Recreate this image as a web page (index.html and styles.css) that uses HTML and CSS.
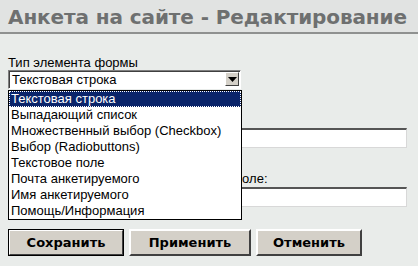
FILE: index.html
```html
<!DOCTYPE html>
<html lang="ru">
<head>
    <meta charset="UTF-8">
    <title>Анкета на сайте - Редактирование</title>
    <link rel="stylesheet" href="styles.css">
</head>
<body>
    <div class="header">
        <h1>Анкета на сайте - Редактирование</h1>
    </div>
    <div class="content">
        <div class="field">
            <div class="label">Тип элемента формы</div>
            <div class="select">
                <span class="select-value">Текстовая строка</span>
                <span class="select-arrow"><svg width="9" height="5" viewBox="0 0 9 5"><path d="M0 0h9L4.5 5z" fill="#000"/></svg></span>
                <ul class="options">
                    <li class="selected">Текстовая строка</li>
                    <li>Выпадающий список</li>
                    <li>Множественный выбор (Checkbox)</li>
                    <li>Выбор (Radiobuttons)</li>
                    <li>Текстовое поле</li>
                    <li>Почта анкетируемого</li>
                    <li>Имя анкетируемого</li>
                    <li>Помощь/Информация</li>
                </ul>
            </div>
        </div>
        <div class="field">
            <div class="label">Вопрос:</div>
            <input class="text" type="text">
        </div>
        <div class="field">
            <div class="label">Значение, вводимое по умолчанию в поле:</div>
            <input class="text" type="text">
        </div>
        <div class="buttons">
            <button class="btn default">Сохранить</button>
            <button class="btn">Применить</button>
            <button class="btn">Отменить</button>
        </div>
    </div>
</body>
</html>
```

FILE: styles.css
```css
body {
    margin: 0;
    background: #e9ecea;
    font-family: "DejaVu Sans", Verdana, sans-serif;
    font-size: 12px;
    color: #000;
}

.header {
    background: #e1e3e2;
    border-bottom: 2px solid #8f9190;
    height: 32px;
    padding: 0 8px;
}

.header h1 {
    margin: 0;
    padding-top: 5px;
    font-size: 20px;
    line-height: 24px;
    font-weight: bold;
    color: #6e7070;
    white-space: nowrap;
    letter-spacing: -0.1px;
}

.content {
    padding: 21px 8px 0 8px;
}

.field {
    margin-bottom: 23px;
}

.label {
    font-family: "Liberation Sans", Arial, sans-serif;
    font-size: 13px;
    line-height: 15px;
    height: 15px;
    white-space: nowrap;
}

.field + .field .label {
    height: 16px;
}

.select {
    position: relative;
    width: 231px;
    height: 17px;
    border: 1px solid;
    border-color: #7f7f7f #ffffff #ffffff #7f7f7f;
    box-shadow: inset 1px 1px 0 #404040;
    background: #fff;
    font-family: "Liberation Sans", Arial, sans-serif;
    font-size: 13px;
    line-height: 17px;
}

.select-value {
    padding-left: 3px;
}

.select-arrow {
    position: absolute;
    right: 1px;
    top: 1px;
    width: 14px;
    height: 14px;
    background: #d4d0c8;
    border: 1px solid;
    border-color: #ffffff #404040 #404040 #ffffff;
    box-sizing: border-box;
    display: flex;
    align-items: center;
    justify-content: center;
}

.options {
    position: absolute;
    left: -1px;
    top: 19px;
    z-index: 2;
    width: 232px;
    margin: 0;
    padding: 0;
    list-style: none;
    background: #fff;
    border: 1px solid #000;
}

.options li {
    height: 16px;
    line-height: 16px;
    padding-left: 2px;
}

.options .selected {
    background: #0a246a;
    color: #fff;
    outline: 1px dotted #fff;
    outline-offset: -1px;
}

.text {
    display: block;
    width: 399px;
    height: 20px;
    margin: 0;
    padding: 0;
    box-sizing: border-box;
    border: 1px solid;
    border-color: #555 #d8d8d8 #d8d8d8 #555;
    border-top-width: 2px;
    background: #fff;
}

.buttons {
    display: flex;
    gap: 5px;
    margin-top: -1px;
}

.btn {
    height: 27px;
    padding: 0;
    background: #d4d0c8;
    border: 2px solid;
    border-color: #ffffff #404040 #404040 #ffffff;
    font-family: "DejaVu Sans", Verdana, sans-serif;
    font-size: 13px;
    font-weight: bold;
    color: #000;
    width: 122px;
}

.btn.default {
    width: 116px;
    outline: 1px solid #000;
    outline-offset: -1px;
}

.btn:last-child {
    width: 106px;
}
```
